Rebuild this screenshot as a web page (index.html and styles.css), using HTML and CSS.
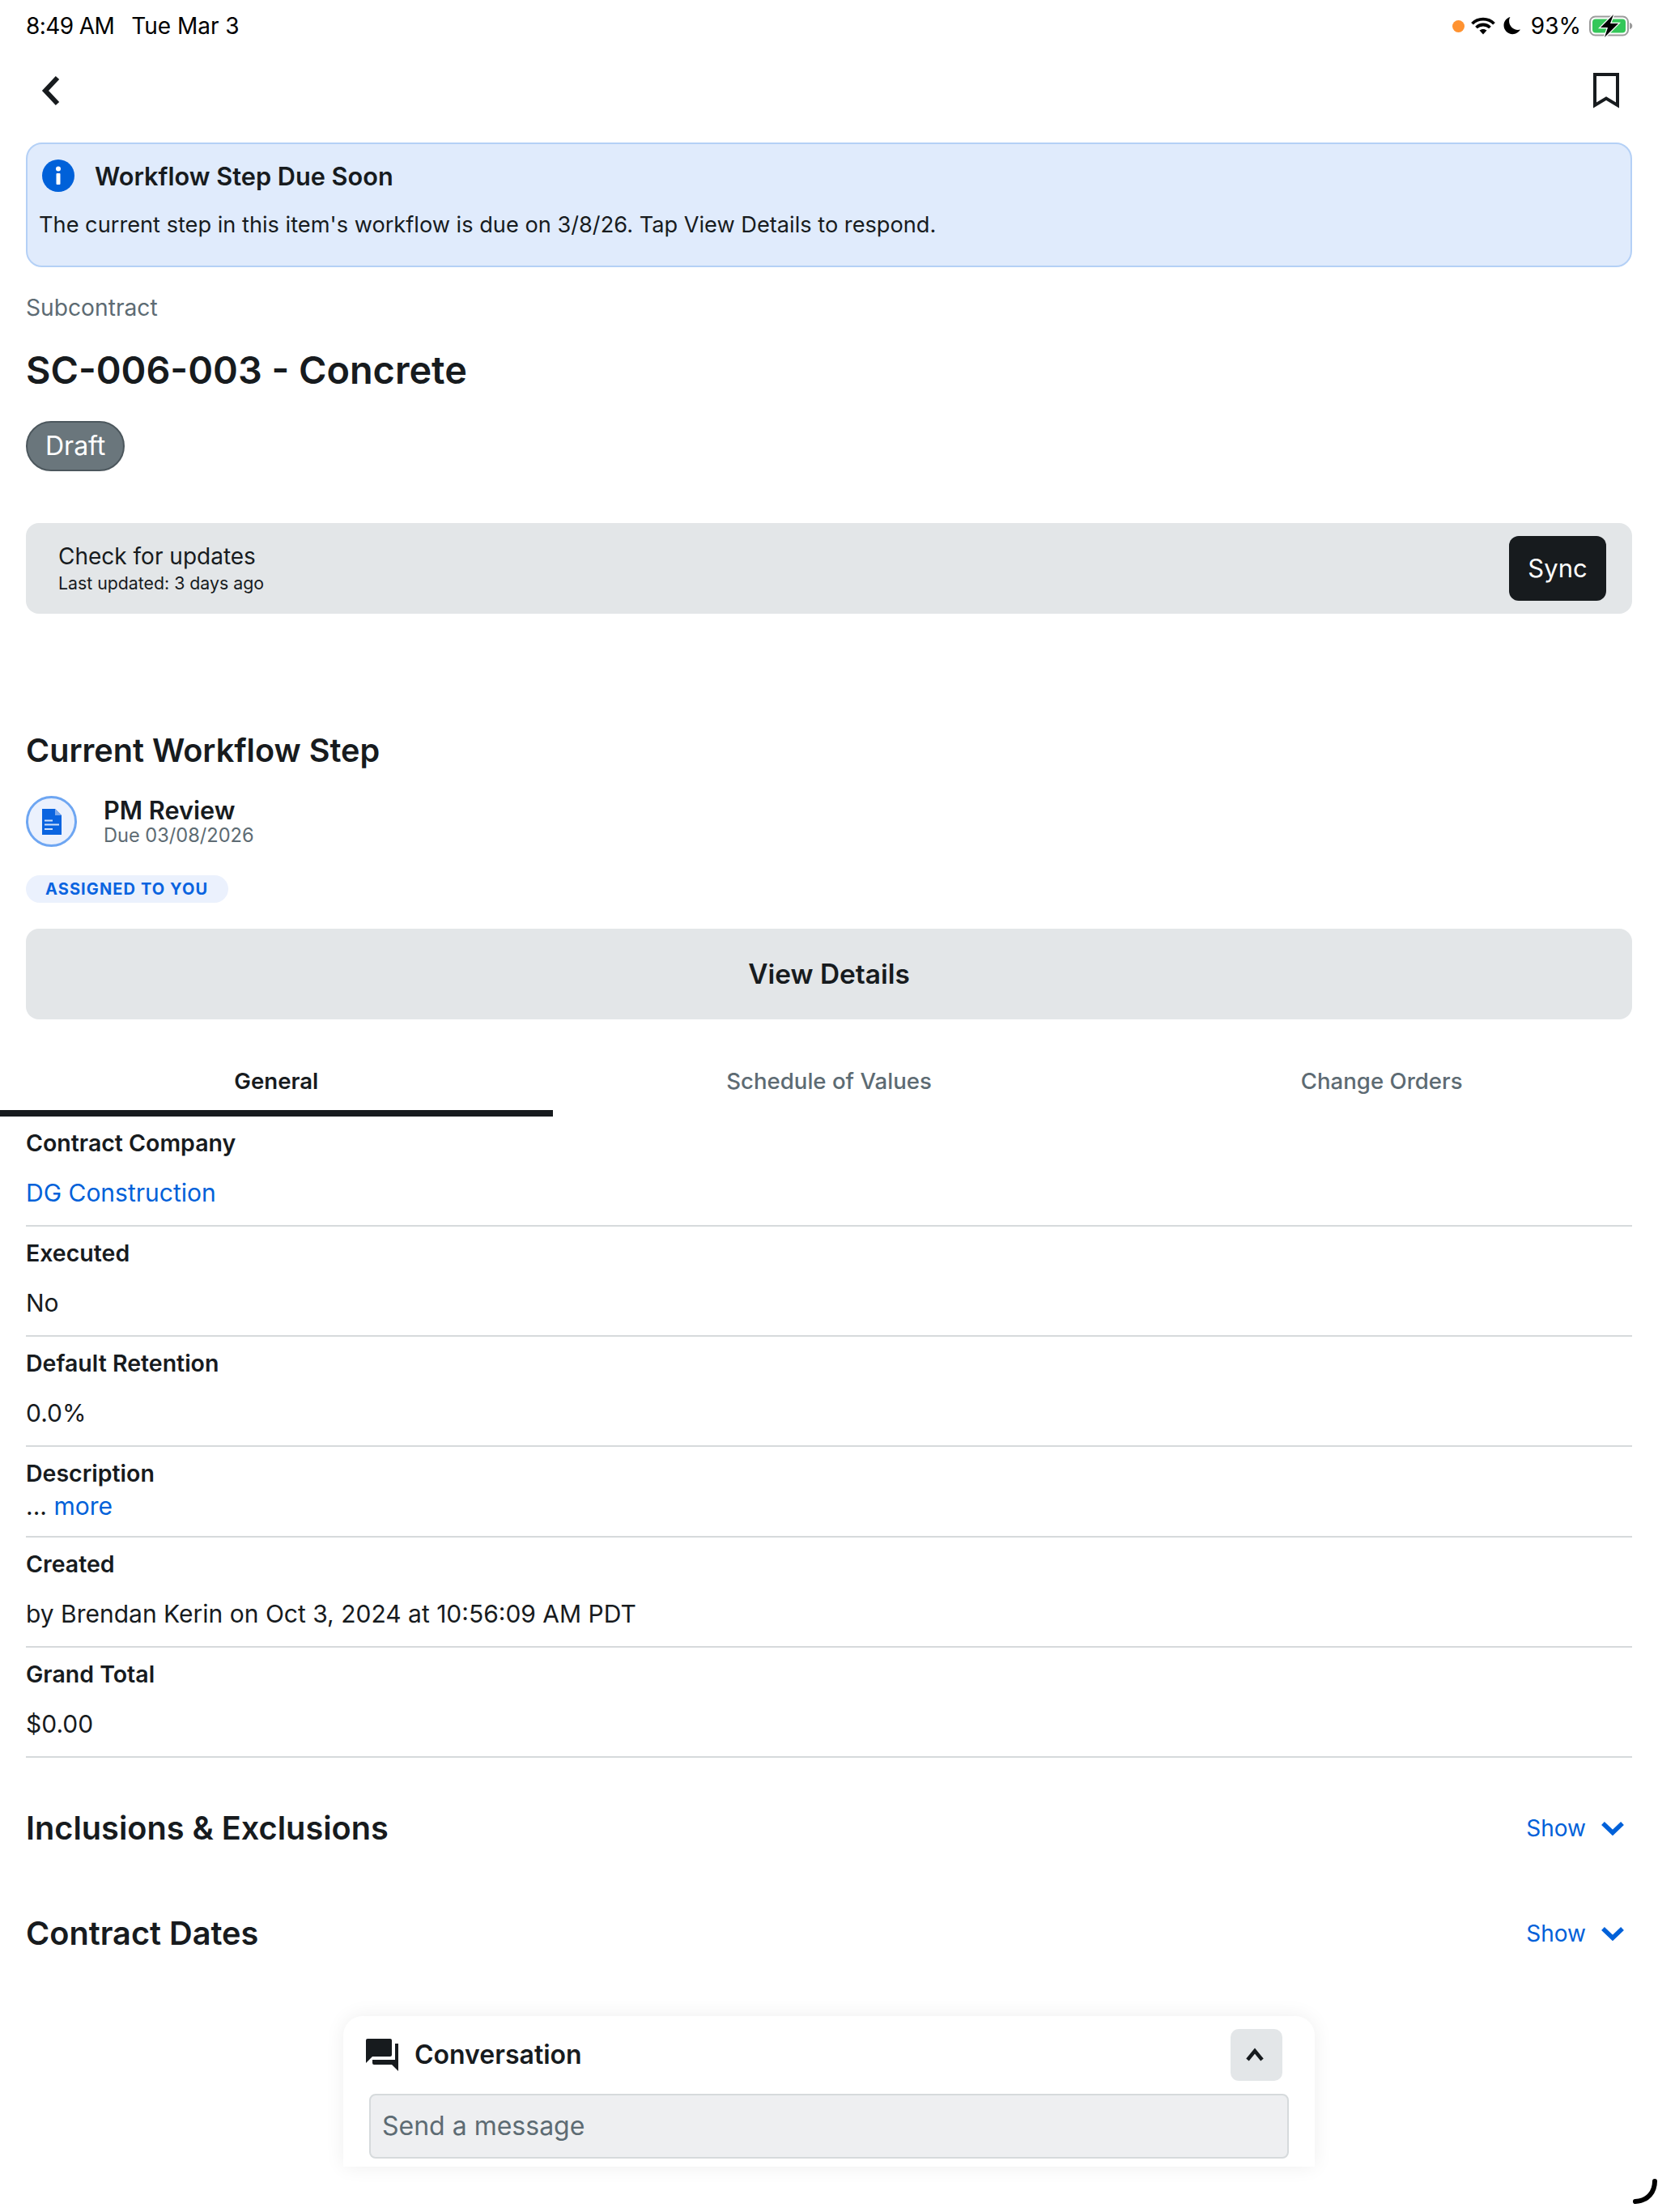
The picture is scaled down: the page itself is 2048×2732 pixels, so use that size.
FILE: index.html
```html
<!DOCTYPE html>
<html lang="en">
<head>
  <meta charset="UTF-8">
  <title>SC-006-003 - Concrete</title>
  <link rel="stylesheet" href="styles.css">
</head>
<body>

  <!-- Status bar -->
  <div class="status-bar">
    <div class="status-time"><span class="clock">8:49 AM</span><span>Tue Mar 3</span></div>
    <div class="status-icons">
      <span class="mic-dot"></span>
      <svg class="wifi" width="30" height="22" viewBox="0 0 30 22"><path d="M1.500 8.200C5 4.600 9.800 2.600 15 2.600s10 2 13.500 5.600" fill="none" stroke="#000" stroke-width="3.800"/><path d="M6.500 13C8.800 10.800 11.800 9.500 15 9.500s6.200 1.300 8.500 3.500" fill="none" stroke="#000" stroke-width="3.800"/><path d="M10.500 16.500c1.200-1 2.800-1.600 4.500-1.600s3.300.6 4.500 1.600L15 21.500z" fill="#000"/></svg>
      <svg class="moon" width="24" height="24" viewBox="0 0 24 24"><path d="M9.500 1C4.800 2.200 1.500 6.400 1.500 11.300c0 6 4.900 10.900 10.900 10.900 4 0 7.600-2.200 9.500-5.600-1 .3-1.900.4-2.900.4-6 0-10.900-4.900-10.900-10.900C8.100 4 8.600 2.400 9.500 1z" fill="#000"/></svg>
      <span class="battery-pct">93%</span>
      <svg class="battery" width="56" height="28" viewBox="0 0 56 28"><rect x="2" y="2.500" width="47" height="23" rx="6.500" fill="none" stroke="#9b9b9b" stroke-width="2"/><rect x="5" y="5.500" width="41" height="17" rx="4" fill="#34c759"/><path d="M51 10c2 .5 3.300 2 3.300 4s-1.300 3.500-3.300 4z" fill="#9b9b9b"/><path d="M31 0L15 16h9l-4 12 17-17h-10z" fill="#000" stroke="#fff" stroke-width="2.500" paint-order="stroke"/></svg>
    </div>
  </div>

  <!-- Nav -->
  <div class="nav-bar">
    <svg width="24" height="38" viewBox="0 0 24 38"><path d="M20 3L5 19l15 16" fill="none" stroke="#171b1e" stroke-width="6"/></svg>
    <svg width="32" height="44" viewBox="0 0 32 44"><path d="M2 2h28v38L16 31.500 2 40z" fill="none" stroke="#171b1e" stroke-width="4"/></svg>
  </div>

  <div class="page">

    <div class="banner">
      <div class="banner-title">
        <svg width="40" height="40" viewBox="0 0 40 40"><circle cx="20" cy="20" r="20" fill="#0061d9"/><circle cx="20" cy="11.500" r="3" fill="#fff"/><rect x="17.500" y="17" width="5" height="14" rx="1" fill="#fff"/></svg>
        <span>Workflow Step Due Soon</span>
      </div>
      <p>The current step in this item's workflow is due on 3/8/26. Tap View Details to respond.</p>
    </div>

    <div class="eyebrow">Subcontract</div>
    <h1>SC-006-003 - Concrete</h1>
    <span class="status-pill">Draft</span>

    <div class="update-bar">
      <div>
        <div class="update-title">Check for updates</div>
        <div class="update-sub">Last updated: 3 days ago</div>
      </div>
      <div class="sync-btn">Sync</div>
    </div>

    <h2 class="workflow-heading">Current Workflow Step</h2>
    <div class="step">
      <div class="step-icon">
        <svg width="24" height="32" viewBox="0 0 24 32"><path d="M0 0h16l8 8v24H0z" fill="#0a64e0"/><path d="M16 0l8 8h-8z" fill="#7fa9ea"/><path d="M3 13.500h10v2H3zM3 18.500h18v2H3zM3 24h10v2H3z" fill="#cfe0fa"/></svg>
      </div>
      <div>
        <div class="step-name">PM Review</div>
        <div class="step-due">Due 03/08/2026</div>
      </div>
    </div>
    <span class="assigned">ASSIGNED TO YOU</span>
    <div class="details-btn">View Details</div>

    <div class="tabs">
      <div class="tab active">General</div>
      <div class="tab">Schedule of Values</div>
      <div class="tab">Change Orders</div>
    </div>

    <div class="field">
      <div class="field-label">Contract Company</div>
      <div class="field-value link">DG Construction</div>
    </div>
    <div class="field">
      <div class="field-label">Executed</div>
      <div class="field-value">No</div>
    </div>
    <div class="field">
      <div class="field-label">Default Retention</div>
      <div class="field-value">0.0%</div>
    </div>
    <div class="field field-short">
      <div class="field-label">Description</div>
      <div class="field-value">... <span class="link">more</span></div>
    </div>
    <div class="field">
      <div class="field-label">Created</div>
      <div class="field-value">by Brendan Kerin on Oct 3, 2024 at 10:56:09 AM PDT</div>
    </div>
    <div class="field">
      <div class="field-label">Grand Total</div>
      <div class="field-value">$0.00</div>
    </div>

    <div class="section first">
      <h2>Inclusions &amp; Exclusions</h2>
      <div class="show">Show
        <svg width="28" height="18" viewBox="0 0 28 18"><path d="M2 3L14 14.500 26 3" fill="none" stroke="#0061d9" stroke-width="5.500"/></svg>
      </div>
    </div>
    <div class="section">
      <h2>Contract Dates</h2>
      <div class="show">Show
        <svg width="28" height="18" viewBox="0 0 28 18"><path d="M2 3L14 14.500 26 3" fill="none" stroke="#0061d9" stroke-width="5.500"/></svg>
      </div>
    </div>
  </div>

  <!-- Floating conversation card -->
  <div class="chat-card">
    <div class="chat-head">
      <svg width="40" height="40" viewBox="0 0 40 40"><path d="M2 0h28a2 2 0 0 1 2 2v18a2 2 0 0 1-2 2H8l-8 8V2a2 2 0 0 1 2-2z" fill="#171b1e"/><path d="M36 6h4v34l-8-8H10a2 2 0 0 1-2-2v-4h28z" fill="#171b1e"/></svg>
      <span class="chat-title">Conversation</span>
      <div class="chat-toggle">
        <svg width="22" height="18" viewBox="0 0 22 18"><path d="M2 15l9-11 9 11" fill="none" stroke="#171b1e" stroke-width="4.500"/></svg>
      </div>
    </div>
    <div class="chat-input">Send a message</div>
  </div>

  <svg class="scroll-arc" width="32" height="34" viewBox="0 0 32 34"><path d="M28 4c0 13-8 24-24 25" fill="none" stroke="#000" stroke-width="6" stroke-linecap="round"/></svg>

</body>
</html>
```

FILE: styles.css
```css
* {
  margin: 0;
  padding: 0;
  box-sizing: border-box;
}

html, body {
  width: 2048px;
  height: 2732px;
  overflow: hidden;
}

body {
  position: relative;
  background: #fff;
  color: #171b1e;
  font-family: Inter, "Liberation Sans", sans-serif;
}

/* STATUS BAR */
.status-bar {
  height: 64px;
  padding: 0 30px 0 32px;
  display: flex;
  justify-content: space-between;
  align-items: center;
  color: #000;
  font-size: 28px;
}

.status-time {
  display: flex;
  gap: 21px;
}

.clock {
  letter-spacing: -0.6px;
}

.status-icons {
  display: flex;
  align-items: center;
}

.mic-dot {
  width: 15px;
  height: 15px;
  border-radius: 50%;
  background: #ff9230;
  margin-right: 8px;
}

.moon {
  margin-left: 9px;
}

.battery-pct {
  margin: 0 9px 0 11px;
}

/* NAV */
.nav-bar {
  height: 112px;
  padding: 0 48px 16px 51px;
  display: flex;
  justify-content: space-between;
  align-items: center;
}

.page {
  padding: 0 32px;
}

/* BANNER */
.banner {
  height: 154px;
  padding: 19px 14px 0;
  background: #e0ebfc;
  border: 2px solid #b4d0f6;
  border-radius: 20px;
}

.banner-title {
  display: flex;
  align-items: center;
  gap: 25px;
  padding-left: 4px;
  font-size: 30.700px;
  font-weight: 600;
}

.banner p {
  margin-top: 23px;
  font-size: 27.200px;
  line-height: 36px;
}

.eyebrow {
  margin-top: 32px;
  font-size: 28.200px;
  line-height: 36px;
  color: #5d6b73;
}

h1 {
  margin-top: 29px;
  font-size: 46.800px;
  line-height: 60px;
  font-weight: 600;
}

.status-pill {
  display: inline-block;
  margin-top: 33px;
  height: 62px;
  padding: 0 22px;
  line-height: 58px;
  font-size: 32px;
  color: #fff;
  background: #6a767c;
  border: 2px solid #4c575d;
  border-radius: 31px;
}

/* UPDATE BAR */
.update-bar {
  margin-top: 64px;
  height: 112px;
  padding: 0 32px 0 40px;
  display: flex;
  justify-content: space-between;
  align-items: center;
  background: #e3e6e8;
  border-radius: 16px;
}

.update-title {
  font-size: 28px;
  line-height: 36px;
}

.update-sub {
  font-size: 21.300px;
  line-height: 30px;
}

.sync-btn {
  width: 120px;
  height: 80px;
  line-height: 80px;
  text-align: center;
  font-size: 31px;
  color: #fff;
  background: #171b1e;
  border-radius: 12px;
}

/* WORKFLOW */
.workflow-heading {
  margin-top: 144px;
  font-size: 39.600px;
  line-height: 50px;
  font-weight: 600;
}

.step {
  margin-top: 31px;
  display: flex;
  align-items: center;
  gap: 33px;
}

.step-icon {
  width: 63px;
  height: 63px;
  display: flex;
  align-items: center;
  justify-content: center;
  background: #ebf1fd;
  border: 3px solid #6ea6f2;
  border-radius: 50%;
}

.step-name {
  font-size: 30.700px;
  line-height: 34px;
  font-weight: 600;
}

.step-due {
  font-size: 23.600px;
  line-height: 28px;
  color: #5d6b73;
}

.assigned {
  display: block;
  width: 250px;
  margin-top: 35px;
  height: 34px;
  line-height: 34px;
  padding-left: 24px;
  font-size: 20px;
  font-weight: 700;
  letter-spacing: 1.100px;
  color: #0a64e0;
  background: #ebf1fd;
  border-radius: 17px;
}

.details-btn {
  margin-top: 32px;
  height: 112px;
  line-height: 112px;
  text-align: center;
  font-size: 33.400px;
  font-weight: 600;
  background: #e3e6e8;
  border-radius: 16px;
}

/* TABS */
.tabs {
  margin: 50px -32px 0;
  display: flex;
}

.tab {
  flex: 1;
  height: 70px;
  padding-top: 8px;
  text-align: center;
  font-size: 27.600px;
  line-height: 36px;
  font-weight: 500;
  color: #5d6b73;
}

.tab.active {
  color: #171b1e;
  font-weight: 600;
  border-bottom: 8px solid #171b1e;
}

/* FIELDS */
.field {
  height: 136px;
  padding-top: 20px;
  border-bottom: 2px solid #d6dadc;
}

.field-short {
  height: 112px;
}

.field-label {
  font-size: 28.500px;
  line-height: 26px;
  font-weight: 600;
}

.field-value {
  margin-top: 28px;
  font-size: 30px;
  line-height: 40px;
}

.field-short .field-value {
  margin-top: 11px;
  line-height: 32px;
}

.link {
  color: #0061d9;
}

/* COLLAPSED SECTIONS */
.section {
  margin-top: 80px;
  height: 50px;
  display: flex;
  justify-content: space-between;
  align-items: center;
}

.section.first {
  margin-top: 62px;
}

.section h2 {
  font-size: 39.700px;
  font-weight: 600;
}

.show {
  display: flex;
  align-items: center;
  gap: 19px;
  padding-right: 10px;
  font-size: 28px;
  color: #0061d9;
}

/* CONVERSATION CARD */
.chat-card {
  position: absolute;
  left: 424px;
  top: 2490px;
  width: 1200px;
  height: 186px;
  padding: 16px 32px 0;
  background: #fff;
  border-radius: 24px 24px 0 0;
  box-shadow: 0 0 24px rgba(0, 0, 0, 0.07);
}

.chat-head {
  height: 64px;
  display: flex;
  align-items: center;
  padding-right: 8px;
}

.chat-head svg:first-child {
  margin-left: -4px;
}

.chat-title {
  flex: 1;
  margin-left: 20px;
  font-size: 32px;
  font-weight: 600;
  position: relative;
  top: -1px;
}

.chat-toggle {
  width: 64px;
  height: 64px;
  display: flex;
  align-items: center;
  justify-content: center;
  background: #e3e6e8;
  border-radius: 10px;
}

.chat-input {
  margin-top: 16px;
  height: 80px;
  line-height: 76px;
  padding-left: 14px;
  font-size: 32px;
  color: #5d6b73;
  background: #eeeff1;
  border: 2px solid #d6dadc;
  border-radius: 8px;
}

.scroll-arc {
  position: absolute;
  right: 0;
  top: 2690px;
}
```
